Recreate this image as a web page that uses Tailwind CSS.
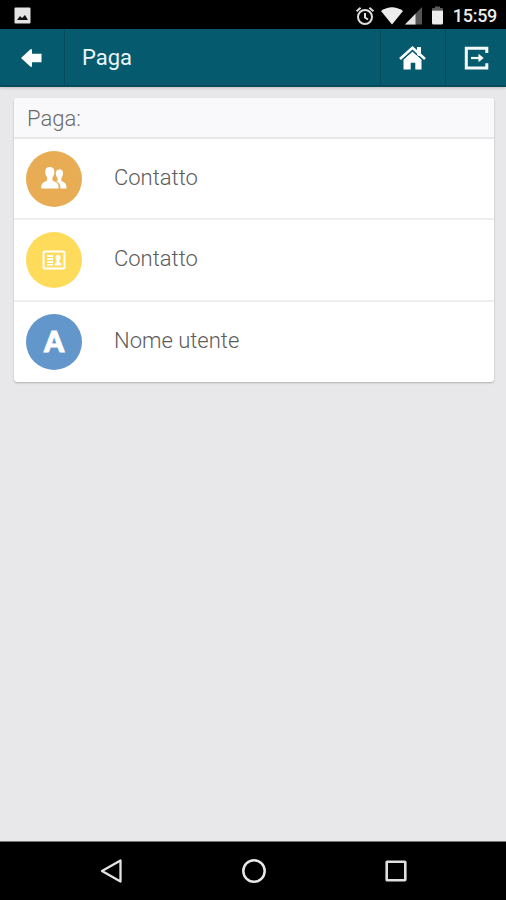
<!DOCTYPE html>
<html lang="it">
<head>
<meta charset="utf-8">
<title>Paga</title>
<script src="https://cdn.jsdelivr.net/npm/@tailwindcss/browser@4"></script>
</head>
<body class="flex h-[900px] w-[506px] flex-col overflow-hidden bg-[#e8e8ea] font-['Roboto',sans-serif]">
  <!-- Status bar -->
  <div class="flex h-[29px] shrink-0 items-center bg-black pt-[2px] text-[#ececec]">
    <svg class="ml-[14px] h-[17px] w-[17px]" viewBox="0 0 17 17"><rect x=".5" y=".5" width="16" height="16" rx="1" fill="#e4e4e4"/><path d="M3 13l3-4 2 2 3-3 3 5z" fill="#111"/></svg>
    <svg class="ml-auto h-[20px] w-[20px]" viewBox="0 0 20 20" fill="none" stroke="#dedede" stroke-width="2"><circle cx="10" cy="11" r="7"/><path d="M10 7v4.500l3 2M1.600 5.200l4-3.400M18.400 5.200l-4-3.400"/></svg>
    <svg class="ml-[6px] h-[18px] w-[22px]" viewBox="0 0 22 18" fill="#ececec"><path d="M0 4Q11-3.500 22 4L11 17.500z"/></svg>
    <svg class="ml-[2px] h-[18px] w-[17px]" viewBox="0 0 17 18"><path d="M0 17.500L17 0v17.500z" fill="#555"/><path d="M0 17.500L10.500 6.700v10.800z" fill="#e4e4e4"/></svg>
    <svg class="ml-[9px] h-[19px] w-[13px]" viewBox="0 0 13 19"><path d="M1 4.500V3q0-1 1-1h2V.500h5V2h2q1 0 1 1v1.500z" fill="#5a5a5a"/><path d="M1 4.500h11V17q0 1.500-1.500 1.500h-8Q1 18.500 1 17z" fill="#ececec"/></svg>
    <span class="mt-[1px] mr-[9px] ml-[9px] text-[18px] leading-[20px] font-medium tracking-[-0.3px]">15:59</span>
  </div>

  <!-- App bar -->
  <header class="flex h-[58px] shrink-0 items-stretch border-b-2 border-[#064a5b] bg-[#065a6e] pt-[1px] shadow-[0_1px_3px_rgba(0,0,0,0.18)]">
    <div class="flex w-[65px] items-center border-r border-[#044a5b] pl-[21px]">
      <svg class="h-[18px] w-[21px]" viewBox="0 0 21 18" fill="#fff"><path d="M0 9L9.500.300H11V4.700h9.500v8.600H11v4.400H9.500z"/></svg>
    </div>
    <h1 class="flex flex-1 items-center pl-[17px] text-[22px] leading-[26px] text-[#eaf6fa]">Paga</h1>
    <div class="flex w-[65px] items-center border-l border-[#044a5b] pl-[18px]">
      <svg class="h-[24px] w-[27px]" viewBox="0 0 27 24"><path d="M18 1h4v9h-4z" fill="#fff"/><path d="M1 13L13.500 1.800 26 13" fill="none" stroke="#fff" stroke-width="2.600"/><path d="M4.500 13.500l9-8 9 8v10h-6.200v-6.700h-4.600v6.700H4.500z" fill="#fff"/><path d="M3.500 14L13.500 5l10 9" fill="none" stroke="#065a6e" stroke-width=".8"/></svg>
    </div>
    <div class="flex w-[61px] items-center border-l border-[#044a5b] pl-[18px]">
      <svg class="h-[24px] w-[25px]" viewBox="0 0 25 24" fill="none" stroke="#f4fafb" stroke-width="3"><path d="M22.800 7V2.300H2.300v19.600h20.500v-4.700"/><path d="M7 12h9" stroke-width="2.200"/><path d="M14.500 7.700l5.200 4.300-5.200 4.300z" fill="#fff" stroke="none"/></svg>
    </div>
  </header>

  <!-- Payment options -->
  <main class="flex-1 px-[14px] pt-[11px] pr-[12px]">
    <section class="overflow-hidden rounded-[3px] bg-white text-[22px] leading-[26px] font-light text-[#5c5c5c] shadow-[0_1px_2px_rgba(0,0,0,0.25)]">
      <h2 class="flex h-[41px] items-center border-b-2 border-[#e6e7e9] bg-[#f9f9fb] pt-[2px] pl-[13px] font-light text-[#6a6a6a]">Paga:</h2>
      <div class="flex h-[81px] items-center border-b-2 border-[#efeff1] pl-[12px]">
        <div class="flex size-[56px] items-center justify-center rounded-full bg-[#e8ac55]">
          <svg class="mb-[1px] h-[24px] w-[28px]" viewBox="0 0 28 24" fill="#fff"><path d="M9.800 1c3 0 4.600 1.700 4.600 4.700 0 2.500-.9 4.400-1.900 5.500v3.300c2.700 1.300 5.400 2.300 5.900 4.800l.2 3.200H1.200l.2-3.200c.5-2.500 3-3.500 5.700-4.800v-3.300C6.100 10.100 5.200 8.200 5.200 5.700c0-3 1.600-4.700 4.600-4.700z"/><path d="M19.300 3.300c2.400 0 3.700 1.400 3.700 3.900 0 2.100-.7 3.800-1.600 4.700v3.200c2.300 1.100 4.400 2 4.900 4.200l.2 3.200h-6.100c.1-4-1.200-5.600-4.100-7.100l1.300-.7v-2.600c-.9-1-1.800-2.600-1.800-4.700 0-2.500 1.100-3.900 3.500-3.900z"/></svg>
        </div>
        <span class="mb-[1px] ml-[32px]">Contatto</span>
      </div>
      <div class="flex h-[82px] items-center border-b-2 border-[#efeff1] pl-[12px]">
        <div class="flex size-[56px] items-center justify-center rounded-full bg-[#fedb5b]">
          <svg class="h-[20px] w-[24px]" viewBox="0 0 24 20" fill="#fff"><rect x="1.500" y="1.500" width="21" height="17" rx="1.500" fill="none" stroke="#fff" stroke-width="2"/><path d="M5 5h6v2H5zM5 8h6v2H5zM5 11h6v2H5zM5 14h6v1.500H5z"/><path d="M16 4.700c1.700 0 2.500 1.100 2.500 2.700 0 1.400-.6 2.400-1.200 3v1.500c1.100.6 2 1.200 2 2.300v1.300h-6.600v-1.300c0-1.100.9-1.700 2-2.300v-1.500c-.7-.6-1.200-1.600-1.200-3 0-1.600.8-2.700 2.500-2.700z"/></svg>
        </div>
        <span class="mb-[2px] ml-[32px]">Contatto</span>
      </div>
      <div class="flex h-[80px] items-center pl-[12px]">
        <div class="flex size-[56px] items-center justify-center rounded-full bg-[#6397cb]">
          <span class="mb-[3px] font-['Lato',sans-serif] text-[28px] leading-[34px] font-black text-white [-webkit-text-stroke:1.2px_white]">A</span>
        </div>
        <span class="mb-[3px] ml-[32px]">Nome utente</span>
      </div>
    </section>
  </main>

  <!-- Navigation bar -->
  <nav class="flex h-[59px] shrink-0 items-center justify-between border-t border-[#777] bg-black pr-[98px] pl-[100px]">
    <svg class="h-[26px] w-[23px]" viewBox="0 0 23 26" fill="none" stroke="#e4e4e4" stroke-width="2.300" stroke-linejoin="round"><path d="M2 13L20.500 2.500v21z"/></svg>
    <svg class="h-[26px] w-[26px]" viewBox="0 0 26 26" fill="none" stroke="#e8e8e8" stroke-width="2.500"><circle cx="13" cy="13" r="10.700"/></svg>
    <svg class="h-[24px] w-[24px]" viewBox="0 0 24 24" fill="none" stroke="#e0e0e0" stroke-width="2.600"><rect x="2.700" y="2.700" width="18.600" height="18.600" rx=".5"/></svg>
  </nav>
</body>
</html>
